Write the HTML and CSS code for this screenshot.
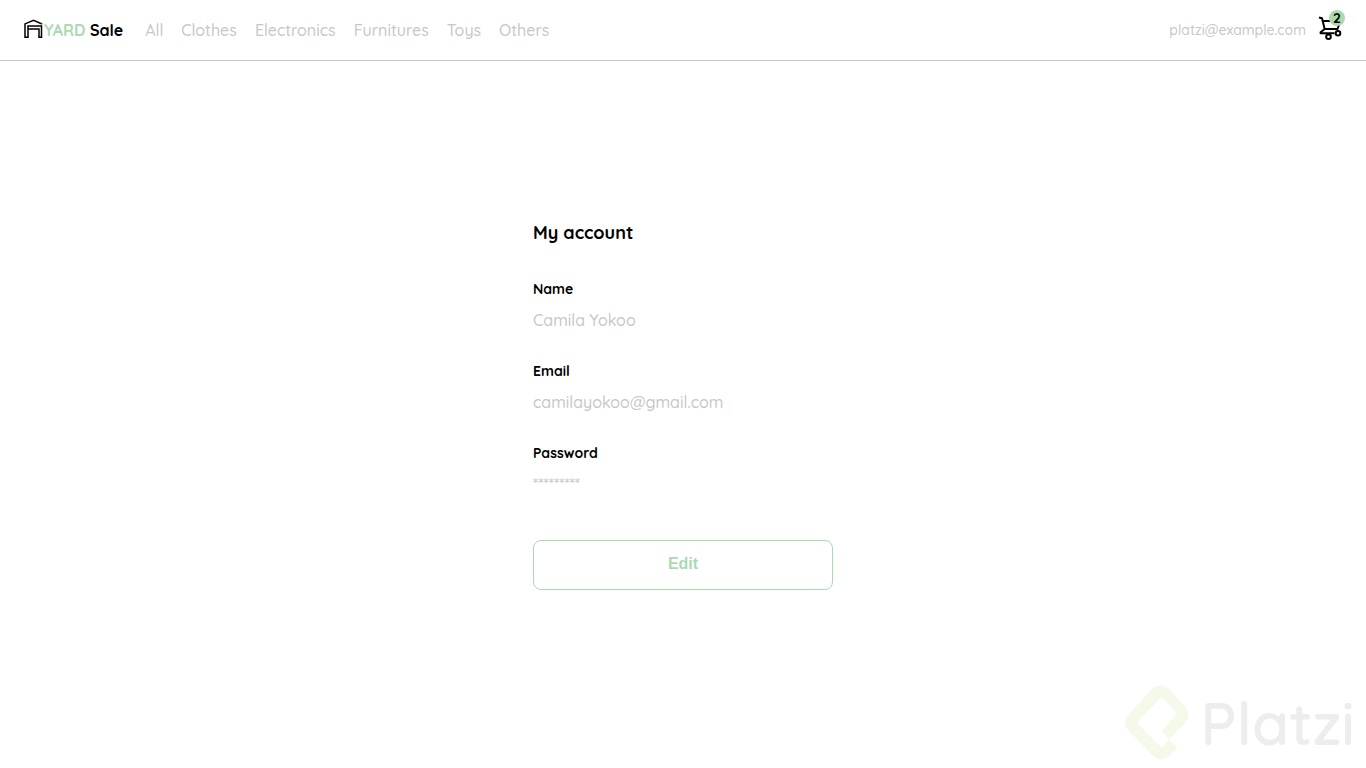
FILE: index.html
```html
<!DOCTYPE html>
<html lang="en">
<head>
<meta charset="utf-8">
<meta name="viewport" content="width=device-width, initial-scale=1">
<title>Yard Sale - My account</title>
<link rel="stylesheet" href="styles.css">
</head>
<body>
<header class="navbar">
  <a class="logo" href="#" aria-label="Yard Sale">
    <svg class="logo-icon" viewBox="0 0 19 20" aria-hidden="true">
      <path d="M17.500 5.600V4.700L9.500 1.400 1 4.900V18.300H4V7H17.500V18.300H15V10H4"/>
    </svg>
    <span class="logo-text"><span class="logo-yard">YARD</span> Sale</span>
  </a>
  <nav class="categories">
    <a href="#">All</a>
    <a href="#">Clothes</a>
    <a href="#">Electronics</a>
    <a href="#">Furnitures</a>
    <a href="#">Toys</a>
    <a href="#">Others</a>
  </nav>
  <div class="session">
    <a class="session-email" href="#">platzi@example.com</a>
    <button class="cart" type="button" aria-label="Shopping cart">
      <svg class="cart-icon" viewBox="0 0 24 24" aria-hidden="true">
        <path d="M1 1.5L4 2.3 6.7 13H19.5L22 6M4.7 5H14M6.7 13L2.6 16.3V17.2H16.5"/>
        <circle cx="10.5" cy="20.7" r="2.3"/>
        <circle cx="20" cy="17.3" r="2.3"/>
      </svg>
      <span class="cart-count">2</span>
    </button>
  </div>
</header>
<main class="account">
  <form class="account-form">
    <h1 class="title">My account</h1>
    <dl class="fields">
      <div class="field"><dt>Name</dt><dd>Camila Yokoo</dd></div>
      <div class="field"><dt>Email</dt><dd>camilayokoo@gmail.com</dd></div>
      <div class="field"><dt>Password</dt><dd>*********</dd></div>
    </dl>
    <button class="edit-button" type="button">Edit</button>
  </form>
</main>
<div class="watermark">
  <svg class="watermark-icon" viewBox="0 0 64 76" aria-hidden="true">
    <path d="M44 54.5L61 37Q66 30 61 22L43 3Q36-2.500 28 3L3 30Q-3 37 3 45L28 71Q36 78 44 71L52.300 62.700 44 54.500 36.700 62.700 11.700 37.700 36.700 11.700 52.300 29 36.700 46Z"/>
  </svg>
  <span class="watermark-text">Platzi</span>
</div>
</body>
</html>
```
FILE: styles.css
```css
:root {
  --green: #acd9b2;
  --gray: #c7c7c7;
  --line: #c7c7c7;
}

* {
  box-sizing: border-box;
}

body {
  margin: 0;
  min-height: 100vh;
  display: flex;
  flex-direction: column;
  background: #fff;
  color: #000;
  font-family: Quicksand, Lato, sans-serif;
  font-size: 16px;
  font-weight: 500;
  line-height: 20px;
}

a {
  color: inherit;
  text-decoration: none;
}

.navbar {
  display: flex;
  align-items: center;
  height: 61px;
  padding: 0 21px 0 24px;
  border-bottom: 1px solid var(--line);
}

.logo {
  display: flex;
  align-items: center;
  gap: 1px;
  margin-right: 22px;
  font-weight: 700;
}

.logo-icon {
  width: 19px;
  height: 20px;
  margin-bottom: 2px;
  fill: none;
  stroke: #000;
  stroke-width: 1.5;
}

.logo-yard {
  color: var(--green);
}

.categories {
  display: flex;
  gap: 18px;
  color: var(--gray);
}

.session {
  display: flex;
  align-items: center;
  gap: 12px;
  margin-left: auto;
  color: var(--gray);
  font-size: 14px;
}

.cart {
  position: relative;
  display: flex;
  padding: 0;
  border: 0;
  background: none;
  color: #000;
  font: inherit;
}

.cart-icon {
  width: 24px;
  height: 24px;
  margin: 0 3px 4px 0;
  fill: none;
  stroke: #000;
  stroke-width: 2;
  stroke-linejoin: round;
}

.cart-count {
  position: absolute;
  top: -6px;
  right: 0;
  width: 16px;
  height: 16px;
  border-radius: 50%;
  background: var(--green);
  font-weight: 700;
  line-height: 16px;
  text-align: center;
}

.account {
  flex: 1;
  display: grid;
  place-items: center;
  padding: 0 24px;
}

.account-form {
  width: 100%;
  max-width: 300px;
  padding-bottom: 18px;
}

.title {
  margin: 0 0 36px;
  font-size: 18px;
  line-height: 22px;
}

.fields {
  display: grid;
  gap: 32px;
  margin: 0 0 46px;
}

.field dt {
  margin-bottom: 12px;
  font-size: 14px;
  font-weight: 700;
  line-height: 18px;
}

.field dd {
  margin: 0;
  color: var(--gray);
}

.edit-button {
  width: 100%;
  height: 50px;
  padding: 0 0 2px;
  border: 1px solid var(--green);
  border-radius: 8px;
  background: #fff;
  color: var(--green);
  font-family: "Liberation Sans", Arial, sans-serif;
  font-size: 16px;
  font-weight: 700;
}

.watermark {
  position: fixed;
  right: 11px;
  bottom: 7px;
  display: flex;
  align-items: center;
  gap: 11px;
  pointer-events: none;
}

.watermark-icon {
  width: 64px;
  height: 76px;
  fill: #f5f9ea;
}

.watermark-text {
  color: #ededed;
  font-size: 60px;
  font-weight: 600;
  line-height: 76px;
}
```
